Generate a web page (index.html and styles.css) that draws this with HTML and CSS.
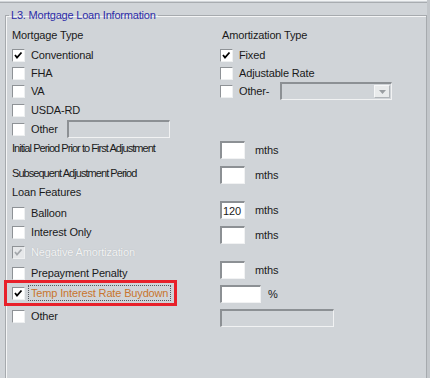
FILE: index.html
```html
<!DOCTYPE html>
<html>
<head>
    <title>L3. Mortgage Loan Information</title>
    <meta name="viewport" content="width=device-width, initial-scale=1">
    <link rel="stylesheet" href="styles.css">
</head>
<body>
    <div class="topbar"></div>
    <fieldset class="group">
        <legend>L3. Mortgage Loan Information</legend>
        <div class="cols">
            <div class="col">
                <div class="row">Mortgage Type</div>
                <div class="row mt2"><span class="cb on"><svg width="11" height="11" viewBox="0 0 11 11"><polyline points="2,5 4,7.5 8.5,2.5" fill="none" stroke="#000" stroke-width="1.8"/></svg></span><span class="lbl">Conventional</span></div>
                <div class="row"><span class="cb"></span><span class="lbl">FHA</span></div>
                <div class="row"><span class="cb"></span><span class="lbl">VA</span></div>
                <div class="row mt1"><span class="cb"></span><span class="lbl">USDA-RD</span></div>
                <div class="row mt1"><span class="cb"></span><span class="lbl">Other</span><span class="field off other-text"></span></div>
                <div class="row mt1 narrow">Initial Period Prior to First Adjustment</div>
                <div class="row mt7 narrow">Subsequent Adjustment Period</div>
                <div class="row mt1">Loan Features</div>
                <div class="row mt3"><span class="cb"></span><span class="lbl">Balloon</span></div>
                <div class="row mt1"><span class="cb"></span><span class="lbl">Interest Only</span></div>
                <div class="row mt2"><span class="cb dis"><svg width="11" height="11" viewBox="0 0 11 11"><polyline points="2,5 4,7.5 8.5,2.5" fill="none" stroke="#a4a8ac" stroke-width="1.8"/></svg></span><span class="lbl disabled">Negative Amortization</span></div>
                <div class="row mt3"><span class="cb"></span><span class="lbl">Prepayment Penalty</span></div>
                <div class="row mt2">
                    <div class="marked">
                        <span class="cb on"><svg width="11" height="11" viewBox="0 0 11 11"><polyline points="2,5 4,7.5 8.5,2.5" fill="none" stroke="#000" stroke-width="1.8"/></svg></span><span class="lbl focus">Temp Interest Rate Buydown</span>
                    </div>
                </div>
                <div class="row mt5"><span class="cb"></span><span class="lbl">Other</span></div>
            </div>

            <div class="col">
                <div class="row ind">Amortization Type</div>
                <div class="row mt2"><span class="cb on"><svg width="11" height="11" viewBox="0 0 11 11"><polyline points="2,5 4,7.5 8.5,2.5" fill="none" stroke="#000" stroke-width="1.8"/></svg></span><span class="lbl">Fixed</span></div>
                <div class="row"><span class="cb"></span><span class="lbl">Adjustable Rate</span></div>
                <div class="row"><span class="cb"></span><span class="lbl">Other-</span>
                    <span class="field off select"><span class="drop"><svg width="7" height="4" viewBox="0 0 7 4"><polygon points="0,0 7,0 3.5,4" fill="#9a9ea2"/></svg></span></span>
                </div>
                <div class="row mt41"><span class="field num"></span><span class="unit">mths</span></div>
                <div class="row mt7"><span class="field num"></span><span class="unit">mths</span></div>
                <div class="row mt17"><span class="field num">120</span><span class="unit">mths</span></div>
                <div class="row mt7"><span class="field num"></span><span class="unit">mths</span></div>
                <div class="row mt17"><span class="field num"></span><span class="unit">mths</span></div>
                <div class="row mt6"><span class="field pct"></span><span class="unit pct-unit">%</span></div>
                <div class="row mt6"><span class="field off wide"></span></div>
            </div>
        </div>
    </fieldset>
</body>
</html>
```

FILE: styles.css
```css
body {
    font-family: "Liberation Sans", Arial, sans-serif;
    font-size: 11px;
    letter-spacing: -0.15px;
    color: #1a1a1a;
    margin: 0;
    background: #d0d4d8;
    height: 378px;
    overflow: hidden;
    border-right: 3px solid #c2c6ca;
    box-sizing: border-box;
    display: flex;
    flex-direction: column;
}
.topbar {
    height: 1px;
    flex: none;
    border-top: 1px solid #f2f4f5;
    border-bottom: 1px solid #a8acb0;
}
.group {
    flex: 1;
    margin: 5px 0 0 5px;
    padding: 4px 6px 0 6px;
    border: 1px solid #a6aaae;
    border-bottom: none;
    box-shadow: inset 1px 1px 0 #f4f5f6;
    min-width: 0;
    min-height: 0;
}
.group legend {
    color: #2c2ca8;
    font-size: 11px;
    line-height: 14px;
    margin-left: -3px;
    padding: 0 2px;
    letter-spacing: -0.2px;
}
.cols {
    display: grid;
    grid-template-columns: 208px 1fr;
}
.col {
    display: flex;
    flex-direction: column;
}
.row {
    height: 18px;
    display: flex;
    align-items: center;
    white-space: nowrap;
}
.narrow {
    letter-spacing: -0.95px;
}
.ind { padding-left: 2px; }
.mt1 { margin-top: 1px; }
.mt2 { margin-top: 2px; }
.mt3 { margin-top: 3px; }
.mt5 { margin-top: 5px; }
.mt6 { margin-top: 6px; }
.mt7 { margin-top: 7px; }
.mt17 { margin-top: 17px; }
.mt41 { margin-top: 41px; }

.cb {
    width: 13px;
    height: 13px;
    box-sizing: border-box;
    background: #fff;
    border: 1px solid;
    border-color: #8e9296 #eef0f1 #eef0f1 #8e9296;
    display: flex;
    align-items: center;
    justify-content: center;
    flex: none;
}
.cb.dis { background: #e6e8ea; }
.lbl {
    margin-left: 6px;
}
.disabled {
    color: #f3f4f5;
    text-shadow: 0 0 1px #a8acb0;
}
.field {
    height: 18px;
    box-sizing: border-box;
    background: #fff;
    border-style: solid;
    border-width: 2px 1px 1px 2px;
    border-color: #8c9094 #f1f2f3 #f1f2f3 #8c9094;
    display: flex;
    align-items: center;
    justify-content: flex-end;
    padding-right: 3px;
    flex: none;
}
.field.off { background: #d0d4d8; }
.other-text {
    width: 103px;
    margin-left: 9px;
}
.select {
    width: 112px;
    margin-left: 11px;
    padding-right: 1px;
}
.drop {
    width: 16px;
    height: 13px;
    background: #e9ebec;
    border: 1px solid #f6f7f8;
    border-right-color: #b0b4b8;
    border-bottom-color: #b0b4b8;
    box-sizing: border-box;
    display: flex;
    align-items: center;
    justify-content: center;
}
.num { width: 25px; }
.pct { width: 41px; }
.wide { width: 114px; }
.unit { margin-left: 10px; }
.pct-unit { margin-left: 7px; }

.marked {
    display: flex;
    align-items: center;
    width: 173px;
    height: 26px;
    margin: -4px 0 -4px -8px;
    padding-left: 5px;
    border: 3px solid #e8202a;
    box-sizing: border-box;
}
.focus {
    color: #c8742e;
    margin-left: 3px;
    padding: 1px 2px;
    border: 1px dotted #555a60;
}
```
